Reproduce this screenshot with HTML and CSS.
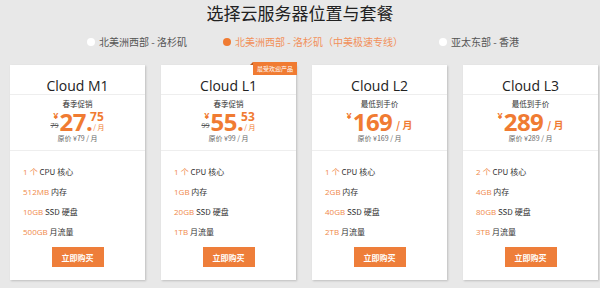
FILE: index.html
```html
<!DOCTYPE html>
<html lang="zh-CN">
<head>
  <meta charset="UTF-8">
  <meta name="viewport" content="width=device-width, initial-scale=1.0">
  <title>选择云服务器位置与套餐</title>
  <link rel="stylesheet" href="styles.css">
</head>

<body>
  <div class="wrapper">
    <h2>选择云服务器位置与套餐</h2>

    <div class="regions">
      <span class="region"><i></i>北美洲西部 - 洛杉矶</span>
      <span class="region active"><i></i>北美洲西部 - 洛杉矶（中美极速专线）</span>
      <span class="region"><i></i>亚太东部 - 香港</span>
    </div>

    <div class="plans">
      <div class="plan">
        <div class="plan-name">Cloud M1</div>
        <div class="plan-price">
          <p class="tag">春季促销</p>
          <div class="price">
            <div class="price-left"><span class="yen">¥</span><s class="old">79</s></div>
            <span class="num">27.</span>
            <div class="price-right"><span class="dec">75</span><span class="unit">/ 月</span></div>
          </div>
          <p class="orig">原价 ¥79 / 月</p>
        </div>
        <ul class="specs">
          <li><b>1 个</b> CPU 核心</li>
          <li><b>512MB</b> 内存</li>
          <li><b>10GB</b> SSD 硬盘</li>
          <li><b>500GB</b> 月流量</li>
        </ul>
        <button class="buy-btn">立即购买</button>
      </div>

      <div class="plan">
        <span class="badge">最受欢迎产品</span>
        <div class="plan-name">Cloud L1</div>
        <div class="plan-price">
          <p class="tag">春季促销</p>
          <div class="price">
            <div class="price-left"><span class="yen">¥</span><s class="old">99</s></div>
            <span class="num">55.</span>
            <div class="price-right"><span class="dec">53</span><span class="unit">/ 月</span></div>
          </div>
          <p class="orig">原价 ¥99 / 月</p>
        </div>
        <ul class="specs">
          <li><b>1 个</b> CPU 核心</li>
          <li><b>1GB</b> 内存</li>
          <li><b>20GB</b> SSD 硬盘</li>
          <li><b>1TB</b> 月流量</li>
        </ul>
        <button class="buy-btn">立即购买</button>
      </div>

      <div class="plan">
        <div class="plan-name">Cloud L2</div>
        <div class="plan-price">
          <p class="tag">最低到手价</p>
          <div class="price">
            <div class="price-left"><span class="yen">¥</span></div>
            <span class="num">169</span>
            <span class="month">/ 月</span>
          </div>
          <p class="orig">原价 ¥169 / 月</p>
        </div>
        <ul class="specs">
          <li><b>1 个</b> CPU 核心</li>
          <li><b>2GB</b> 内存</li>
          <li><b>40GB</b> SSD 硬盘</li>
          <li><b>2TB</b> 月流量</li>
        </ul>
        <button class="buy-btn">立即购买</button>
      </div>

      <div class="plan">
        <div class="plan-name">Cloud L3</div>
        <div class="plan-price">
          <p class="tag">最低到手价</p>
          <div class="price">
            <div class="price-left"><span class="yen">¥</span></div>
            <span class="num">289</span>
            <span class="month">/ 月</span>
          </div>
          <p class="orig">原价 ¥289 / 月</p>
        </div>
        <ul class="specs">
          <li><b>2 个</b> CPU 核心</li>
          <li><b>4GB</b> 内存</li>
          <li><b>80GB</b> SSD 硬盘</li>
          <li><b>3TB</b> 月流量</li>
        </ul>
        <button class="buy-btn">立即购买</button>
      </div>
    </div>
  </div>
</body>
</html>
```

FILE: styles.css
```css
* {
  margin: 0;
  padding: 0;
  box-sizing: border-box;
  font-family: "Open Sans", "Noto Sans CJK SC", sans-serif;
}

body {
  width: 100%;
  height: 100vh;
  overflow: hidden;
  background: #e8e8e8;
}

.wrapper {
  padding: 3px 10px 0;
}

.wrapper h2 {
  text-align: center;
  font-size: 17px;
  font-weight: 400;
  line-height: 20px;
  color: #222;
  font-family: "Noto Sans CJK SC", sans-serif;
}

.regions {
  display: flex;
  justify-content: center;
  gap: 36px;
  margin-top: 12px;
  height: 14px;
  padding-left: 6px;
}

.region {
  display: flex;
  align-items: center;
  gap: 4px;
  font-size: 10px;
  line-height: 14px;
  color: #555;
  font-family: "Noto Sans CJK SC", sans-serif;
}

.region i {
  width: 8px;
  height: 8px;
  border-radius: 50%;
  background: #fff;
}

.region.active {
  color: #f2905a;
}

.region.active i {
  background: #f07b32;
}

.plans {
  display: flex;
  gap: 16px;
  margin-top: 16px;
}

.plan {
  position: relative;
  flex: 0 0 135px;
  background: #fff;
  padding-bottom: 13px;
  box-shadow: 1px 1px 2px rgba(0, 0, 0, 0.18);
  display: flex;
  flex-direction: column;
}

.badge {
  position: absolute;
  top: -3px;
  right: -1px;
  height: 13px;
  padding: 0 4px;
  background: #f07b32;
  color: #fff;
  font-size: 6px;
  line-height: 13px;
  font-family: "Noto Sans CJK SC", sans-serif;
}

.badge::before {
  content: "";
  position: absolute;
  left: -3px;
  top: 0;
  border-bottom: 3px solid #b95a1f;
  border-left: 3px solid transparent;
}

.plan-name {
  text-align: center;
  font-size: 14px;
  line-height: 16px;
  color: #222;
  padding: 13px 0 0;
  height: 30px;
  border-bottom: 1px solid #eee;
}

.plan-price {
  height: 56px;
  border-bottom: 1px solid #eee;
  text-align: center;
  padding-top: 4px;
}

.tag {
  font-size: 7.5px;
  line-height: 10px;
  color: #333;
  font-family: "Noto Sans CJK SC", sans-serif;
}

.price {
  display: flex;
  justify-content: center;
  align-items: flex-end;
  height: 21px;
  margin-top: 2px;
  color: #f07b32;
}

.price-left {
  display: flex;
  flex-direction: column;
  align-items: flex-end;
  align-self: stretch;
  margin-right: 1px;
}

.yen {
  font-size: 9px;
  font-weight: 700;
  line-height: 10px;
}

.old {
  font-size: 7px;
  line-height: 9px;
  color: #555;
}

.num {
  font-size: 24px;
  font-weight: 700;
  line-height: 21px;
  letter-spacing: -0.5px;
}

.price-right {
  display: flex;
  flex-direction: column;
  align-self: stretch;
  margin-left: -3px;
}

.dec {
  font-size: 12px;
  font-weight: 700;
  line-height: 12px;
}

.unit {
  font-size: 7px;
  line-height: 9px;
  padding-left: 4px;
  font-family: "Noto Sans CJK SC", sans-serif;
}

.month {
  font-size: 10px;
  font-weight: 700;
  line-height: 14px;
  margin-left: 4px;
  font-family: "Noto Sans CJK SC", sans-serif;
}

.orig {
  font-size: 7px;
  line-height: 10px;
  margin-top: 1px;
  color: #666;
  font-family: "Noto Sans CJK SC", sans-serif;
}

.specs {
  list-style: none;
  padding: 11px 13px 0;
}

.specs li {
  font-size: 8px;
  line-height: 20px;
  color: #333;
  font-family: "Noto Sans CJK SC", sans-serif;
}

.specs li b {
  font-weight: 400;
  color: #f0894a;
}

.buy-btn {
  align-self: center;
  width: 52px;
  height: 20px;
  margin-top: 5px;
  border: none;
  outline: none;
  background: #ee7e3a;
  color: #fff;
  font-size: 8px;
  font-weight: 700;
  font-family: "Noto Sans CJK SC", sans-serif;
  cursor: pointer;
}
```
